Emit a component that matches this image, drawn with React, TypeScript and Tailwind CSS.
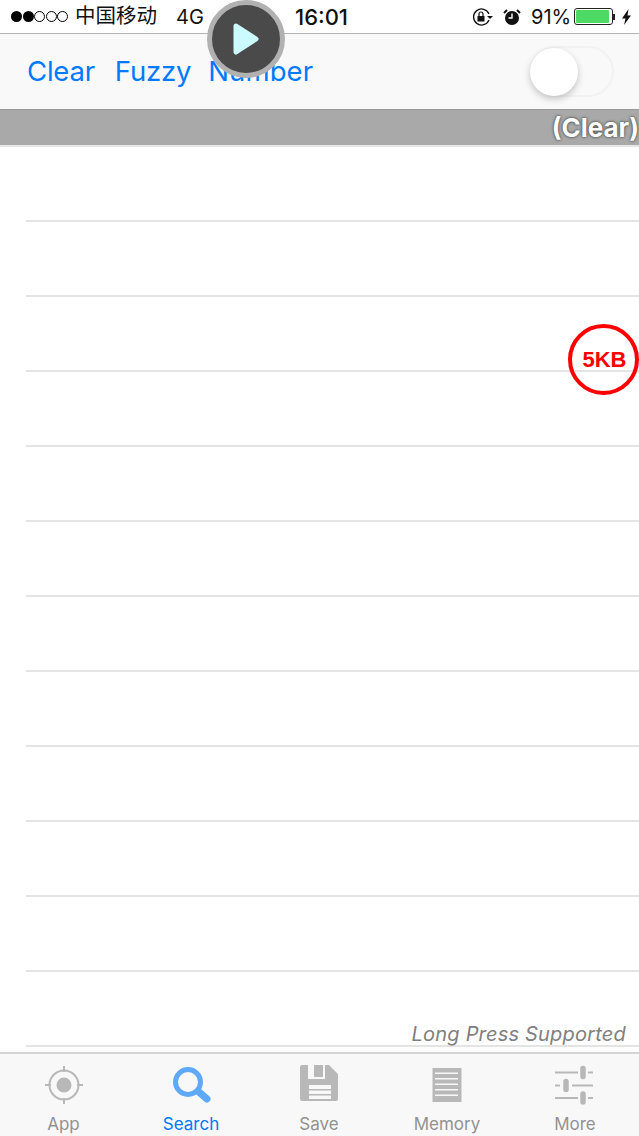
import React from "react";

const ROWS = Array.from({ length: 12 });

function TabIcon({ name, color }: { name: string; color: string }) {
  if (name === "App") {
    return (
      <svg width="40" height="40" viewBox="0 0 40 40" fill="none" stroke={color} strokeWidth="2">
        <circle cx="20" cy="20" r="14.500" />
        <circle cx="20" cy="20" r="7.500" fill={color} stroke="none" />
        <path d="M20 1v6M20 33v6M1 20h6M33 20h6" />
      </svg>
    );
  }
  if (name === "Search") {
    return (
      <svg width="40" height="40" viewBox="0 0 40 40" fill="none" stroke={color}>
        <circle cx="17" cy="17" r="12.500" strokeWidth="5" />
        <path d="M28 27l8 7" strokeWidth="7" strokeLinecap="round" />
      </svg>
    );
  }
  if (name === "Save") {
    return (
      <svg width="40" height="40" viewBox="0 0 40 40">
        <path
          fill={color}
          fillRule="evenodd"
          d="M1 2a2 2 0 0 1 2-2h27l9 9v25a2 2 0 0 1-2 2H3a2 2 0 0 1-2-2zM9 0v14h17V0h-2v12h-9V0zM10 20v14h22V20z"
        />
        <path fill={color} d="M10 24h22v1.500H10zM10 29h22v1.500H10z" />
      </svg>
    );
  }
  if (name === "Memory") {
    return (
      <svg width="40" height="40" viewBox="0 0 40 40">
        <path
          fill={color}
          fillRule="evenodd"
          d="M5.500 3h29v34h-29zM8 7.500V9h23V7.500zM8 13v1.500h23V13zM8 18.500V20h23v-1.500zM8 24v1.500h23V24zM8 29.500V31h23v-1.500z"
        />
      </svg>
    );
  }
  return (
    <svg width="40" height="40" viewBox="0 0 40 40" fill="none" stroke={color}>
      <path d="M0 7.500h23M33 7.500h5M0 20.500h5M17 20.500h21M0 33h23M33 33h5" strokeWidth="1.800" />
      <path d="M28 3.500v8M11 16.500v8M28 29v8" strokeWidth="5.500" strokeLinecap="round" />
    </svg>
  );
}

const TABS = [
  { name: "App", w: "w-[127px]" },
  { name: "Search", w: "w-[128px]" },
  { name: "Save", w: "w-[128px]" },
  { name: "Memory", w: "w-[128px]" },
  { name: "More", w: "w-[128px]" },
];

export default function App() {
  return (
    <div className="relative flex flex-col w-[639px] h-[1136px] overflow-hidden bg-white font-['Inter','Noto_Sans_CJK_SC',sans-serif]">
      {/* status bar */}
      <div className="flex items-center h-[34px] shrink-0 border-b border-[#b2b2b2] bg-white text-[#111] text-[20px]">
        <div className="flex items-center gap-[0.5px] ml-[11px]">
          <span className="w-[11px] h-[11px] rounded-full bg-black" />
          <span className="w-[11px] h-[11px] rounded-full bg-black" />
          <span className="w-[11px] h-[11px] rounded-full border border-black" />
          <span className="w-[11px] h-[11px] rounded-full border border-black" />
          <span className="w-[11px] h-[11px] rounded-full border border-black" />
        </div>
        <span className="ml-[7px] w-[101px] text-[20.500px] leading-none">中国移动</span>
        <span className="w-[28px] leading-none">4G</span>
        <span className="ml-[91px] w-[169px] text-[22px] font-medium leading-none">16:01</span>
        <svg width="22" height="18" viewBox="0 0 22 18" fill="none" className="ml-[8px]">
          <path d="M17 12a8 8 0 1 1 0-6" stroke="#111" strokeWidth="1.300" />
          <path d="M15 8h6l-3 3z" fill="#111" />
          <rect x="5.500" y="8" width="7" height="5.500" fill="#111" />
          <path d="M7 8V6a2 2 0 0 1 4 0v2" stroke="#111" strokeWidth="1.200" />
        </svg>
        <svg width="20" height="18" viewBox="0 0 20 18" className="ml-[8px]">
          <circle cx="10" cy="10" r="7" fill="#111" />
          <path d="M10 5.500V10H6.500" stroke="#fff" strokeWidth="1.400" fill="none" />
          <path d="M2 5l3-3M18 5l-3-3" stroke="#111" strokeWidth="2" />
        </svg>
        <span className="ml-[9px] w-[38px] leading-none">91%</span>
        <div className="ml-[5px] flex items-center">
          <div className="w-[39px] h-[17px] rounded-[3px] border border-[#222] p-[1px]">
            <div className="w-[33px] h-full rounded-[1px] bg-[#4cd964]" />
          </div>
          <div className="w-[2px] h-[6px] bg-[#222]" />
        </div>
        <svg width="11" height="18" viewBox="0 0 11 18" className="ml-[6px]">
          <path d="M7.500 1L1 10.500h3.500L3 17l7-9.500H6.500z" fill="#111" />
        </svg>
      </div>

      {/* toolbar */}
      <div className="flex items-center justify-between h-[75px] shrink-0 pl-[27px] pr-[25px] bg-[#f9f9f9] text-[#007aff] text-[27.500px]">
        <div className="flex gap-[19px] tracking-[-0.2px]">
          <span className="mr-[1px]">Clear</span>
          <span>Fuzzy</span>
          <span className="ml-[-2px] tracking-[0.1px]">Number</span>
        </div>
        <div className="relative w-[84px] h-[51px] rounded-full border-2 border-[#f2f2f2]">
          <div className="absolute left-[-2px] top-0 w-[48px] h-[48px] rounded-full bg-white shadow-[0_3px_7px_rgba(0,0,0,0.22)]" />
        </div>
      </div>

      {/* filter strip */}
      <div className="flex items-center justify-end h-[38px] shrink-0 border-t border-[#999] border-b-2 border-b-[#e6e6e6] bg-[#a9a9a9] text-white text-[26px] font-bold [text-shadow:0_0_3px_#222]">
        (Clear)
      </div>

      {/* results */}
      <div className="flex-1 overflow-hidden bg-white">
        {ROWS.map((_, i) => (
          <div key={i} className="h-[75px] ml-[26px] border-b-2 border-[#e4e4e4]" />
        ))}
      </div>

      {/* tab bar */}
      <div className="flex h-[84px] shrink-0 border-t-2 border-[#d6d6d6] bg-[#f8f8f8]">
        {TABS.map((tab) => {
          const active = tab.name === "Search";
          return (
            <div key={tab.name} className={`flex flex-col items-center pt-[11px] ${tab.w}`}>
              <TabIcon name={tab.name} color={active ? "#5fa9fb" : "#b8b8b8"} />
              <span className={`mt-[9px] text-[17px] leading-[20px] ${active ? "text-[#007aff]" : "text-[#929292]"}`}>
                {tab.name}
              </span>
            </div>
          );
        })}
      </div>

      {/* overlays */}
      <span className="absolute right-[13px] top-[1019px] text-[20px] tracking-[0.2px] italic text-[#808080]">
        Long Press Supported
      </span>
      <div className="absolute left-[568px] top-[324px] flex items-center justify-center w-[71px] h-[71px] pl-[2px] rounded-full border-[4px] border-[#ff0000] text-[22px] font-bold text-[#ff0000] font-['Liberation_Sans',sans-serif]">
        5KB
      </div>
      <div className="absolute left-[207px] top-0 flex items-center justify-center w-[78px] h-[78px] rounded-full border-[5px] border-[#b1b1b1] bg-[#4a4a4a]">
        <svg width="28" height="34" viewBox="0 0 28 34">
          <path d="M4 4l20 13L4 30z" fill="#ccfbff" stroke="#ccfbff" strokeWidth="5" strokeLinejoin="round" />
        </svg>
      </div>
    </div>
  );
}
